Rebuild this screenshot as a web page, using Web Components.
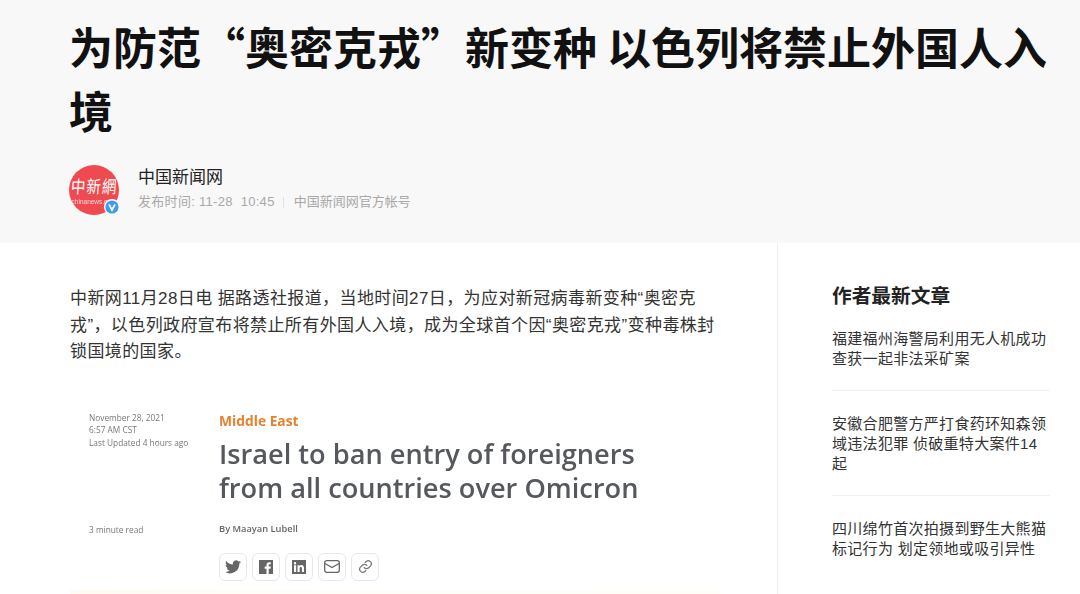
<!DOCTYPE html>
<html lang="zh">
<head>
<meta charset="utf-8">
<title>为防范“奥密克戎”新变种 以色列将禁止外国人入境</title>
<style>
html, body { margin: 0; height: 594px; overflow: hidden; background: #fff; }
body { font-family: "Liberation Sans", "Noto Sans CJK SC", sans-serif; }
</style>
</head>
<body>
<article-page></article-page>

<script>
const CJK = '"Liberation Sans", "Noto Sans CJK SC", sans-serif';

class ArticleHeader extends HTMLElement {
    connectedCallback() {
        this.attachShadow({ mode: 'open' });
        this.shadowRoot.innerHTML = `
            <style>
                :host { display: block; height: 243px; box-sizing: border-box; padding: 14px 30px 0 69px; background: #f8f8f8; font-family: ${CJK}; }
                h1 { margin: 0; font-family: "Noto Sans CJK SC", sans-serif; font-size: 44px; line-height: 64px; font-weight: 700; color: #111; }
                .author { display: flex; align-items: flex-start; margin-top: 22px; }
                .avatar { position: relative; width: 50px; height: 52px; flex: none; margin-right: 19px; }
                .name { font-size: 17px; line-height: 24px; color: #222; margin-top: 2px; }
                .meta { display: flex; align-items: center; font-size: 13px; line-height: 20px; color: #a8a8a8; margin-top: 2px; white-space: pre; }
                .time { letter-spacing: .3px; }
                .sep { width: 1px; height: 11px; background: #e2e2e2; margin: 0 10px 0 8px; }
            </style>
            <h1>为防范“奥密克戎”新变种 以色列将禁止外国人入境</h1>
            <div class="author">
                <div class="avatar"><news-logo></news-logo></div>
                <div>
                    <div class="name">中国新闻网</div>
                    <div class="meta"><span class="time">发布时间: 11-28  10:45</span><span class="sep"></span><span>中国新闻网官方帐号</span></div>
                </div>
            </div>
        `;
    }
}

class NewsLogo extends HTMLElement {
    connectedCallback() {
        this.attachShadow({ mode: 'open' });
        this.shadowRoot.innerHTML = `
            <style>
                :host { display: block; width: 52px; height: 52px; font-family: "Noto Sans CJK TC", serif; }
                .disc { width: 50px; height: 50px; margin-top: 1px; border-radius: 50%; background: #ef4a50; color: #fff; display: flex; flex-direction: column; align-items: center; box-sizing: border-box; padding-top: 12px; overflow: hidden; }
                .cn { font-size: 14.5px; line-height: 18px; font-weight: 400; letter-spacing: 1px; white-space: nowrap; transform: scaleY(1.2) skewX(-5deg); }
                .en { font-family: "Liberation Sans", sans-serif; font-size: 6.500px; line-height: 9px; margin-top: 2px; opacity: .8; white-space: nowrap; }
                svg { position: absolute; left: 35px; top: 35px; }
            </style>
            <div class="disc"><div class="cn">中新網</div><div class="en">chinanews.com</div></div>
            <svg width="16" height="16" viewBox="0 0 16 16">
                <circle cx="8" cy="8" r="8" fill="#fff"/>
                <circle cx="8" cy="8" r="6.600" fill="#3d9bf0"/>
                <path d="M5 5.400 L8 11 L11 5.400" fill="none" stroke="#fff" stroke-width="1.800"/>
            </svg>
        `;
    }
}

class ReutersShot extends HTMLElement {
    connectedCallback() {
        this.attachShadow({ mode: 'open' });
        this.shadowRoot.innerHTML = `
            <style>
                :host { display: block; margin-top: 38px; width: 650px; height: 190px; overflow: hidden; font-family: "Open Sans", sans-serif; position: relative; }
                .shot { display: grid; grid-template-columns: 130px 1fr; padding: 8px 0 0 19px; filter: blur(.6px); }
                .side { font-size: 8.300px; line-height: 12.500px; color: #777; white-space: nowrap; }
                .read { margin-top: 74.500px; }
                .tag { font-size: 13.800px; line-height: 18px; font-weight: 700; color: #e5822e; }
                h2 { margin: 7px 0 0; font-size: 27.200px; line-height: 34.500px; font-weight: 600; color: #55585c; white-space: nowrap; }
                .by { font-size: 9.300px; line-height: 12px; font-weight: 600; color: #666; margin-top: 17px; }
                .share { display: flex; gap: 5px; margin-top: 18px; }
                .share span { width: 28px; height: 28px; box-sizing: border-box; border: 1px solid #e6e6e6; border-radius: 6px; display: flex; align-items: center; justify-content: center; }
                .strip { position: absolute; left: 0; right: 0; bottom: 0; height: 4px; background: linear-gradient(90deg, #fffbf3, #fefef9 60%, #fefef6); }
            </style>
            <div class="shot">
                <div class="side">
                    <div>November 28, 2021</div>
                    <div>6:57 AM CST</div>
                    <div>Last Updated 4 hours ago</div>
                    <div class="read">3 minute read</div>
                </div>
                <div>
                    <div class="tag">Middle East</div>
                    <h2>Israel to ban entry of foreigners<br>from all countries over Omicron</h2>
                    <div class="by">By Maayan Lubell</div>
                    <div class="share">
                        <span><svg width="16" height="14" viewBox="0 0 24 20"><path fill="#666" d="M24 2.400c-.9.4-1.800.7-2.800.8 1-.6 1.800-1.600 2.200-2.700-1 .6-2 1-3.100 1.200A4.900 4.900 0 0 0 11.900 6.200C7.800 6 4.200 4 1.700.9c-1.300 2.200-.7 5.100 1.500 6.600-.8 0-1.600-.2-2.200-.6 0 2.300 1.600 4.400 3.900 4.900-.7.200-1.500.2-2.200.1.600 2 2.400 3.400 4.600 3.400A9.900 9.900 0 0 1 0 17.300 14 14 0 0 0 21.500 4.900c1-.7 1.800-1.500 2.500-2.500z"/></svg></span>
                        <span><svg width="14" height="14" viewBox="0 0 14 14"><path fill="#666" d="M0 0h14v14H9.700V8.700h1.800l.3-2.100H9.700V5.300c0-.6.200-1 1-1h1.100V2.400c-.2 0-.9-.1-1.600-.1-1.600 0-2.700 1-2.700 2.800v1.500H5.700v2.100h1.800V14H0z"/></svg></span>
                        <span><svg width="14" height="14" viewBox="0 0 14 14"><path fill="#666" d="M0 0h14v14H0zM2 5.300v6.700h2.100V5.300zM3 2a1.200 1.200 0 1 0 0 2.400A1.200 1.200 0 0 0 3 2zm2.500 3.300v6.700h2.100V8.500c0-1 .4-1.500 1.200-1.500s1.100.6 1.100 1.500V12H12V8c0-1.900-1-2.900-2.500-2.900-.9 0-1.500.4-1.900 1V5.300z"/></svg></span>
                        <span><svg width="16" height="13" viewBox="0 0 16 13" fill="none" stroke="#666" stroke-width="1.300"><rect x=".7" y=".7" width="14.600" height="11.600" rx="2"/><path d="M1 3.500 L8 7.500 L15 3.500"/></svg></span>
                        <span><svg width="15" height="15" viewBox="0 0 24 24" fill="none" stroke="#777" stroke-width="2" stroke-linecap="round"><path d="M10 14a5 5 0 0 0 7.100 0l3-3A5 5 0 0 0 13 4l-1.500 1.500"/><path d="M14 10a5 5 0 0 0-7.100 0l-3 3A5 5 0 0 0 11 20l1.500-1.500"/></svg></span>
                    </div>
                </div>
            </div>
            <div class="strip"></div>
        `;
    }
}

class SideList extends HTMLElement {
    connectedCallback() {
        this.attachShadow({ mode: 'open' });
        const items = [
            '福建福州海警局利用无人机成功查获一起非法采矿案',
            '安徽合肥警方严打食药环知森领域违法犯罪 侦破重特大案件14起',
            '四川绵竹首次拍摄到野生大熊猫标记行为 划定领地或吸引异性'
        ];
        this.shadowRoot.innerHTML = `
            <style>
                :host { display: block; font-family: ${CJK}; }
                h3 { margin: 0; font-size: 19.700px; line-height: 28px; font-weight: 700; color: #222; }
                .item { font-size: 15px; letter-spacing: .3px; line-height: 20px; color: #333; padding: 23px 0 21px; border-bottom: 1px solid #f2f2f2; }
                h3 + .item { padding-top: 19px; }
                .item:last-child { border-bottom: 0; }
            </style>
            <h3>作者最新文章</h3>
            ${items.map(t => `<div class="item">${t}</div>`).join('')}
        `;
    }
}

class ArticlePage extends HTMLElement {
    connectedCallback() {
        this.attachShadow({ mode: 'open' });
        this.shadowRoot.innerHTML = `
            <style>
                :host { display: block; width: 1080px; height: 594px; overflow: hidden; font-family: ${CJK}; }
                .body { display: grid; grid-template-columns: 778px 1fr; }
                main { box-sizing: border-box; height: 351px; padding: 43px 57px 0 70px; border-right: 1px solid #f0f0f0; overflow: hidden; }
                p { margin: 0; font-size: 17px; letter-spacing: .4px; line-height: 26.500px; color: #333; }
                aside { padding: 39px 30px 0 54px; }
            </style>
            <article-header></article-header>
            <div class="body">
                <main>
                    <p>中新网11月28日电 据路透社报道，当地时间27日，为应对新冠病毒新变种“奥密克戎”，以色列政府宣布将禁止所有外国人入境，成为全球首个因“奥密克戎”变种毒株封锁国境的国家。</p>
                    <reuters-shot></reuters-shot>
                </main>
                <aside><side-list></side-list></aside>
            </div>
        `;
    }
}

customElements.define('news-logo', NewsLogo);
customElements.define('article-header', ArticleHeader);
customElements.define('reuters-shot', ReutersShot);
customElements.define('side-list', SideList);
customElements.define('article-page', ArticlePage);
</script>
</body>
</html>
